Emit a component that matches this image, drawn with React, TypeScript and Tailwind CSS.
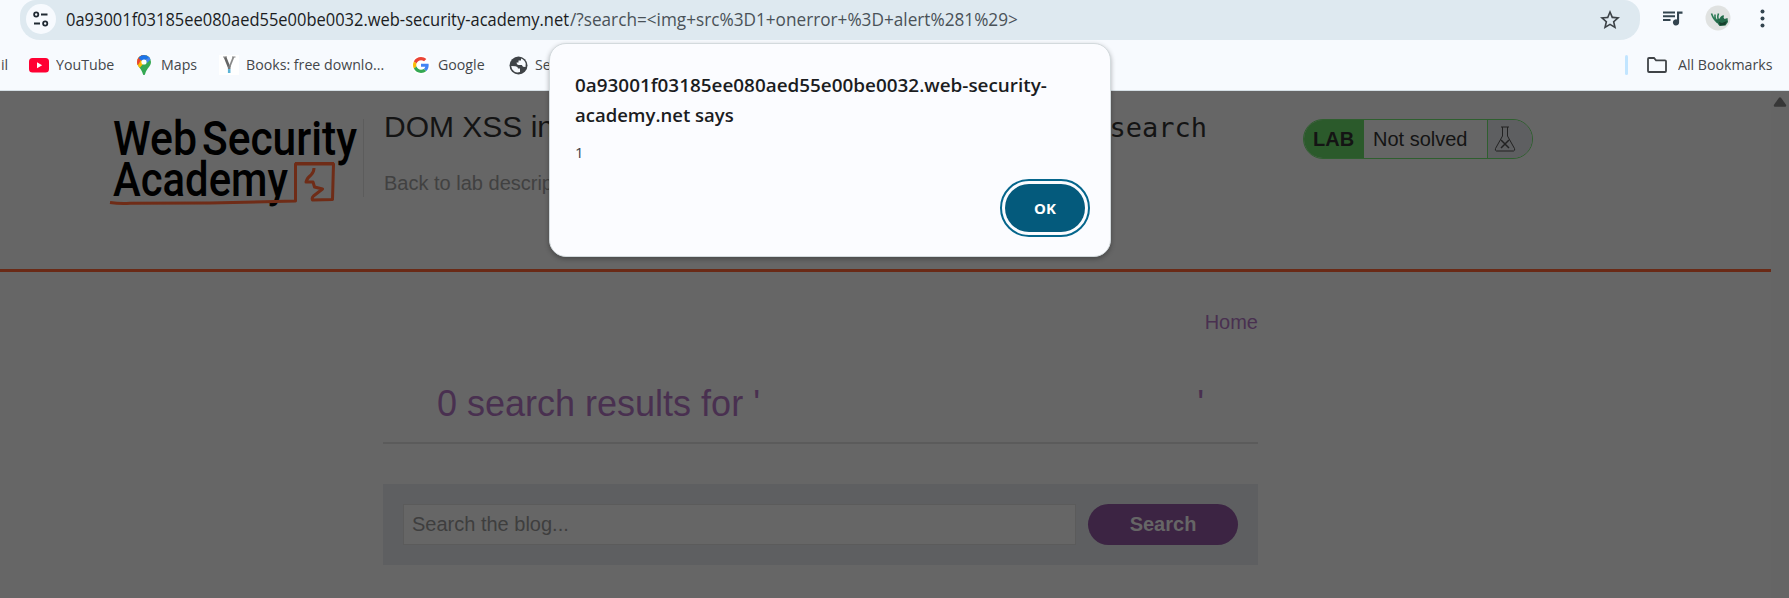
import React from "react";

const ui = "font-['Open_Sans','Noto_Sans',sans-serif]";
const arial = "font-['Liberation_Sans',Arial,sans-serif]";

function TuneIcon() {
  return (
    <svg width="18" height="18" viewBox="0 0 18 18" fill="none" stroke="#202a33" strokeWidth="1.800">
      <circle cx="4.200" cy="4.500" r="2.100" />
      <path d="M9 4.500h6.500M2 13.500h6" />
      <circle cx="13.200" cy="13.500" r="2.100" />
    </svg>
  );
}

function StarIcon() {
  return (
    <svg width="20" height="20" viewBox="2 2 20 20" fill="#3c4247">
      <path d="M22 9.240l-7.190-.62L12 2 9.190 8.630 2 9.240l5.460 4.730L5.820 21 12 17.270 18.180 21l-1.630-7.030L22 9.240zM12 15.400l-3.760 2.270 1-4.280-3.320-2.880 4.380-.38L12 6.100l1.710 4.040 4.380.38-3.320 2.880 1 4.280L12 15.400z" />
    </svg>
  );
}

function QueueIcon() {
  return (
    <svg width="20" height="15" viewBox="0 0 20 15" fill="#33444f">
      <path d="M0 .5h12v2H0zM0 4.300h12v2H0zM0 8.100h7.500v2H0z" />
      <path d="M14 .5h5.500v2.300h-3.400v8.600a3.100 3.100 0 1 1-2.100-2.900z" />
    </svg>
  );
}

function Avatar() {
  return (
    <svg width="26" height="26" viewBox="0 0 26 26">
      <circle cx="13" cy="13" r="12.500" fill="#e0e2e1" />
      <path d="M6.500 8.500q2 6 6 9M10 9.500q-.5 5 3 8M13.500 8.500q-2 5 1.500 9M19 11q-4 0-4 6" fill="none" stroke="#2c7a55" strokeWidth="1.600" />
      <path d="M10 15l5-1.500 2.500-3 2 3.500 3-1 .5 4-2.500 3.500-6 .5z" fill="#24694a" />
      <path d="M14 17l3 1 5-2-2 4-5 .5z" fill="#163f2c" />
    </svg>
  );
}

function YouTubeIcon() {
  return (
    <svg width="20" height="15" viewBox="0 0 20 15">
      <rect width="20" height="14.500" rx="3.500" fill="#ff0033" />
      <path d="M8 4.200l5.200 3-5.200 3z" fill="#fff" />
    </svg>
  );
}

function MapsIcon() {
  return (
    <svg width="14" height="20" viewBox="0 0 14 20">
      <defs>
        <clipPath id="pin">
          <path d="M7 0a7 7 0 0 1 7 7c0 4.500-4.500 6.500-5.700 11.500C8 19.600 7.600 20 7 20s-1-.4-1.300-1.500C4.500 13.500 0 11.500 0 7a7 7 0 0 1 7-7z" />
        </clipPath>
      </defs>
      <g clipPath="url(#pin)">
        <path d="M0 0h14v20H0z" fill="#34a853" />
        <path d="M0 16L13 1V0H0z" fill="#fbbc04" />
        <path d="M0 0h7L1 10H0z" fill="#ea4335" />
        <path d="M1.500 3L5 6l9-3V0H4z" fill="#1a73e8" />
        <path d="M9 5l4-4 1 3-4 4z" fill="#4285f4" />
      </g>
      <circle cx="7" cy="7" r="2.600" fill="#fff" />
    </svg>
  );
}

function BooksIcon() {
  return (
    <svg width="20" height="20" viewBox="0 0 20 20">
      <path d="M0 0h20v20H0z" fill="#fff" />
      <path d="M6 2l4 10" fill="none" stroke="#666" strokeWidth="2.600" />
      <path d="M14.500 2L10.500 12" fill="none" stroke="#888" strokeWidth="1.800" />
      <path d="M4 2h4M13 2h3.500" stroke="#888" />
      <path d="M10.200 11v3" stroke="#777" strokeWidth="2.600" />
      <path d="M10.200 14v4" stroke="#5cb3d6" strokeWidth="2.600" />
    </svg>
  );
}

function GoogleIcon() {
  return (
    <svg width="20" height="20" viewBox="-6 -6 60 60">
      <circle cx="24" cy="24" r="29" fill="#fff" />
      <path fill="#EA4335" d="M24 9.500c3.540 0 6.710 1.220 9.210 3.600l6.850-6.850C35.900 2.380 30.470 0 24 0 14.620 0 6.510 5.380 2.560 13.220l7.980 6.190C12.430 13.720 17.740 9.500 24 9.500z" />
      <path fill="#4285F4" d="M46.980 24.550c0-1.570-.15-3.090-.38-4.550H24v9.020h12.940c-.58 2.960-2.260 5.480-4.780 7.180l7.730 6c4.510-4.180 7.090-10.360 7.090-17.650z" />
      <path fill="#FBBC05" d="M10.530 28.590c-.48-1.450-.76-2.990-.76-4.590s.27-3.140.76-4.590l-7.980-6.190C.92 16.460 0 20.120 0 24c0 3.880.92 7.540 2.560 10.780l7.970-6.190z" />
      <path fill="#34A853" d="M24 48c6.480 0 11.930-2.130 15.890-5.810l-7.730-6c-2.150 1.450-4.920 2.300-8.160 2.300-6.260 0-11.570-4.220-13.470-9.910l-7.980 6.190C6.510 42.620 14.620 48 24 48z" />
    </svg>
  );
}

function GlobeIcon() {
  return (
    <svg width="19" height="19" viewBox="0 0 19 19">
      <circle cx="9.500" cy="9.500" r="9" fill="#3f4347" />
      <path d="M2.200 10l4.300.2q2.500.3 2.500 2.300h2v3.500q-3 1.200-5.800-.5Q2.300 13.300 2.200 10z" fill="#f7fafe" />
      <path d="M12 2.600q3.700 1.300 4.700 5l-.2 3.400-2.500-.2-1.200-1.800H9.500q-2-.3-2-2.500H9.500V4.500H12z" fill="#f7fafe" />
    </svg>
  );
}

function FolderIcon() {
  return (
    <svg width="20" height="16" viewBox="0 0 20 16" fill="none" stroke="#3f4347" strokeWidth="1.800">
      <path d="M1 14V2q0-1 1-1h5l2 2.300h9q1 0 1 1V14q0 1-1 1H2q-1 0-1-1z" />
    </svg>
  );
}

function AcademyLogo() {
  return (
    <svg width="252" height="92" viewBox="0 0 252 92">
      <g fill="#000" fontFamily="Roboto, sans-serif" fontWeight="500" fontSize="48">
        <text x="4" y="39" textLength="84" lengthAdjust="spacingAndGlyphs">Web</text>
        <text x="93" y="39" textLength="155" lengthAdjust="spacingAndGlyphs">Security</text>
        <text x="4" y="80" textLength="175" lengthAdjust="spacingAndGlyphs">Academy</text>
      </g>
      <g fill="none" stroke="#6f2c17" strokeLinejoin="round">
        <path d="M1 86.500q10 1.500 20 .8l80-.3 85.500-2V48h38l-1 35.500-20 .5q-1-2 1-4l9-7-8-2-1.500-5h-7q1-4 5-7 3-3 3-7" strokeWidth="3" />
        <path d="M186 47.500h39" strokeWidth="3.200" />
      </g>
    </svg>
  );
}

function FlaskIcon() {
  return (
    <svg width="22" height="26" viewBox="0 0 22 26" fill="none" stroke="#222" strokeWidth="1">
      <path d="M7 1h8M8.500 1v9L1.500 22.500q-.8 2 1 2.500h17q1.800-.5 1-2.500L13.500 10V1" />
      <path d="M7 14l8 8M15 14l-8 8" strokeWidth="1.500" />
    </svg>
  );
}

function Bookmark({ icon, label, className }: { icon: React.ReactNode; label: string; className: string }) {
  return (
    <div className={`flex h-full shrink-0 items-center whitespace-nowrap ${className}`}>
      {icon}
      <span className="-mt-0.5 origin-left scale-x-[0.945]">{label}</span>
    </div>
  );
}

function BrowserChrome() {
  return (
    <div className={`h-[91px] border-b border-[#d5dfe5] bg-[#f7fafe] ${ui}`}>
      <div className="flex h-10 items-start">
        <div className="ml-5 flex h-10 w-[1620px] items-center rounded-b-[20px] rounded-t-[16px] bg-[#dee9f0] pl-1.5">
          <div className="-mt-0.5 flex h-[30px] w-[30px] items-center justify-center rounded-full bg-[#f7fafe]">
            <TuneIcon />
          </div>
          <div className="-mt-0.5 ml-[10px] flex grow whitespace-nowrap text-[18px] leading-[40px] text-[#4a5258]">
            <span className="w-[504px] origin-left scale-x-[0.915] text-[#1b1d1f]">0a93001f03185ee080aed55e00be0032.web-security-academy.net</span>
            <span className="origin-left scale-x-[0.955]">/?search=&lt;img+src%3D1+onerror+%3D+alert%281%29&gt;</span>
          </div>
          <div className="mr-5"><StarIcon /></div>
        </div>
        <div className="ml-[23px] mt-[11px]"><QueueIcon /></div>
        <div className="ml-[22px] mt-[5px]"><Avatar /></div>
        <svg className="ml-[29px] mt-[9px]" width="5" height="20" viewBox="0 0 5 20" fill="#33444f">
          <circle cx="2.500" cy="2.500" r="2" /><circle cx="2.500" cy="9.500" r="2" /><circle cx="2.500" cy="16.500" r="2" />
        </svg>
      </div>
      <div className="flex h-[50px] items-center text-[15px] text-[#44474a]">
        <Bookmark icon={null} label="il" className="w-[29px] pl-px" />
        <Bookmark icon={<YouTubeIcon />} label="YouTube" className="w-[108px] gap-[7px]" />
        <Bookmark icon={<MapsIcon />} label="Maps" className="w-[82px] gap-[10px]" />
        <Bookmark icon={<BooksIcon />} label="Books: free downlo..." className="w-[192px] gap-[7px]" />
        <Bookmark icon={<GoogleIcon />} label="Google" className="w-[98px] gap-[7px]" />
        <Bookmark icon={<GlobeIcon />} label="Se" className="w-[60px] gap-[7px]" />
        <div className="ml-auto mr-[19px] h-5 w-[3px] rounded bg-[#c2e5ff]" />
        <Bookmark icon={<FolderIcon />} label="All Bookmarks" className="w-[142px] gap-[11px]" />
      </div>
    </div>
  );
}

function LabStatus() {
  return (
    <div className="ml-[45px] mt-7 flex h-10 w-[230px] overflow-hidden rounded-[20px] border border-[#2f5f2f] text-[20px] leading-[38px] text-[#141414]">
      <div className="w-[60px] bg-[#2b5a2b] pl-[9px] font-bold">LAB</div>
      <div className="w-[124px] border-r border-[#2f5f2f] pl-[9px]">Not solved</div>
      <div className="flex grow items-center bg-[#5e5f61] pl-[6px]"><FlaskIcon /></div>
    </div>
  );
}

function AlertDialog() {
  return (
    <div className={`absolute left-[549px] top-[43px] h-[214px] w-[562px] rounded-[17px] border border-[#d3dadd] bg-[#fbfcff] pl-[25px] pr-5 pt-[26px] shadow-[0_2px_5px_rgba(0,0,0,0.3)] ${ui}`}>
      <div className="whitespace-nowrap text-[18.75px] font-semibold leading-[30px] text-[#1b1d1f]">
        <div className="origin-left scale-x-[1.007]">0a93001f03185ee080aed55e00be0032.web-security-</div>
        <div className="origin-left scale-x-[0.987]">academy.net says</div>
      </div>
      <div className="mt-[8px] text-[15px] leading-[28px] text-[#3c4247]">1</div>
      <div className="flex justify-end">
        <button className="mt-[13px] h-[58px] w-[90px] rounded-[29px] border-2 border-[#05668c] p-[3px]">
          <span className="flex h-full items-center justify-center rounded-[24px] bg-[#045a7c] text-[15px] font-bold text-white">OK</span>
        </button>
      </div>
    </div>
  );
}

export default function App() {
  return (
    <div className="relative h-[598px] w-[1789px] overflow-hidden bg-[#666]">
      <BrowserChrome />
      <div className={`flex h-[507px] ${arial}`}>
        <main className="w-[1771px]">
          <header className="flex h-[181px] border-b-[3px] border-[#6a2a16]">
            <div className="ml-[109px] mt-[25px] w-[252px] shrink-0"><AcademyLogo /></div>
            <div className="ml-[2px] mt-7 h-[78px] w-px bg-[#5c5c5c]" />
            <div className="ml-[20px] w-[874px] shrink-0">
              <h1 className="mt-[18px] flex h-[36px] items-center justify-between pr-[51px] text-[30px] leading-[36px] text-[#141414]">
                <span>DOM XSS in</span>
                <code className="mt-0.5 font-['DejaVu_Sans_Mono',monospace] text-[27px]">search</code>
              </h1>
              <div className="mt-[27px] text-[20px] leading-[23px] text-[#414141]">Back to lab description</div>
            </div>
            <LabStatus />
          </header>
          <section className="ml-[383px] w-[875px]">
            <nav className="pt-[39px] text-right text-[20px] leading-[23px] text-[#493050]">Home</nav>
            <h2 className="mt-[49px] flex h-[61px] justify-between pl-[54px] pr-[54px] text-[36px] leading-[41px] text-[#493050]">
              <span>0 search results for '</span>
              <span>'</span>
            </h2>
            <hr className="-mt-[2px] h-[2px] border-0 bg-[#5b5b5b]" />
            <form className="mt-10 flex h-[81px] gap-3 bg-[#5e5f61] p-5">
              <div className="h-[41px] w-[673px] border border-[#5b5b5b] bg-[#666] pl-[8px] text-[20px] leading-[39px] text-[#3e3e3e]">Search the blog...</div>
              <button className="h-[41px] w-[150px] rounded-full bg-[#3c2443] text-[20px] font-bold leading-[41px] text-[#666]">Search</button>
            </form>
          </section>
        </main>
        <div className="flex grow justify-center bg-[#656565] pt-[6px]">
          <svg width="14" height="10" viewBox="0 0 14 10" fill="#373737"><path d="M6 .8q1-1 2 0l5 7q.8 2-1 2H2q-1.800 0-1-2z" /></svg>
        </div>
      </div>
      <AlertDialog />
    </div>
  );
}
